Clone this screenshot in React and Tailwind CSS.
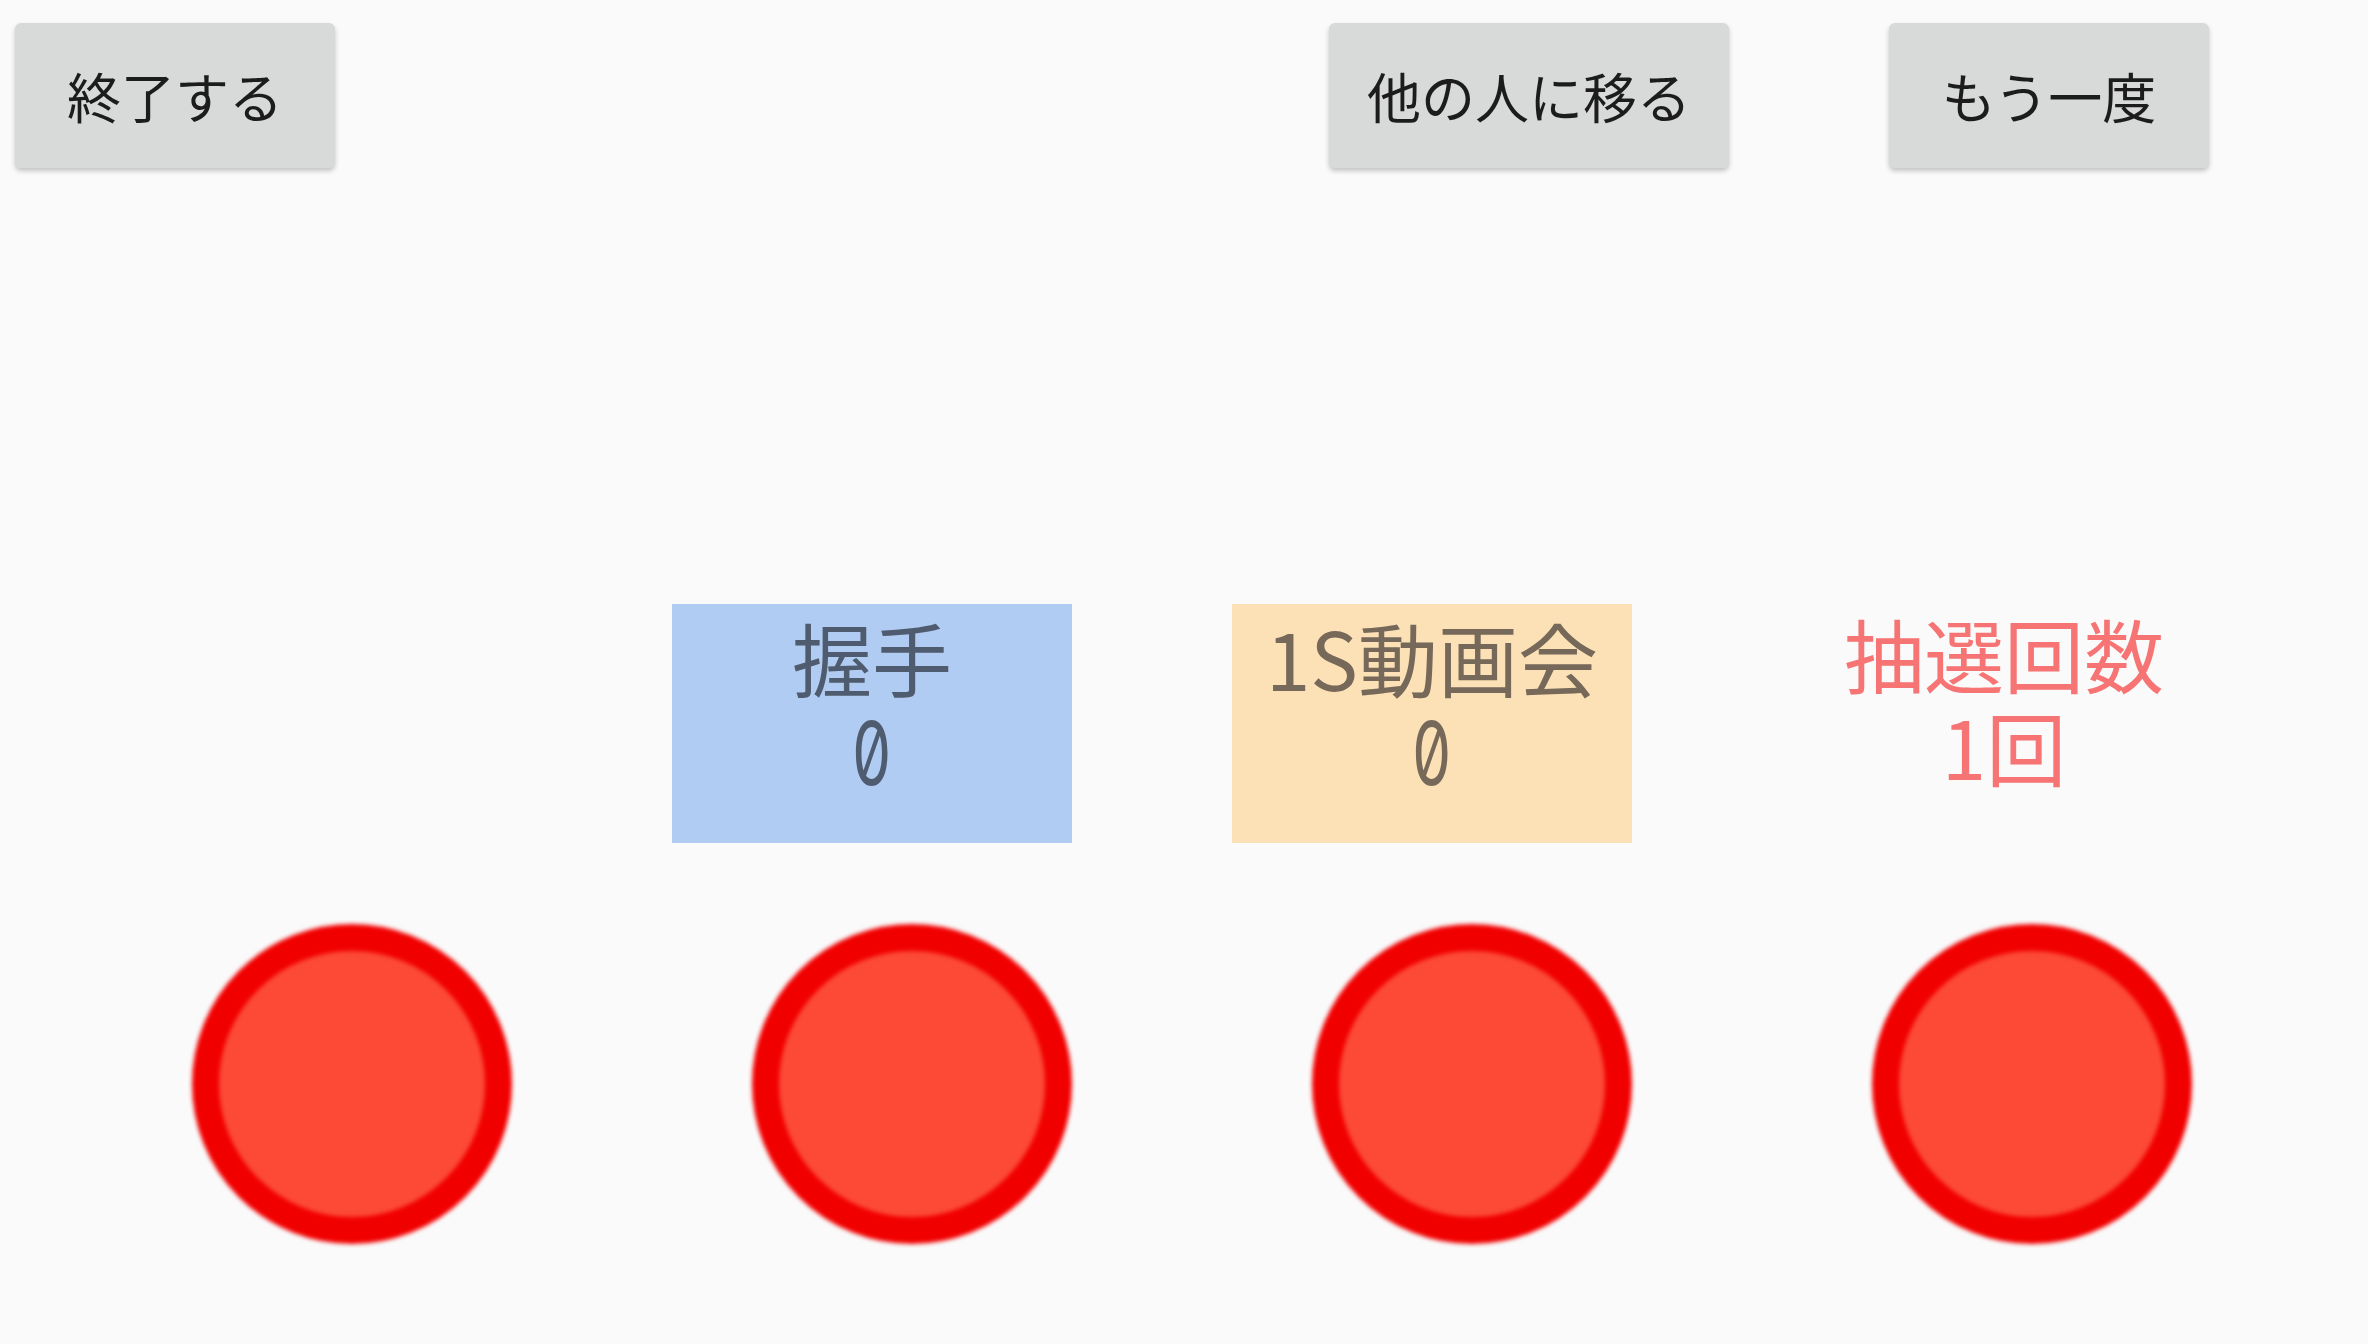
const jp = { fontFamily: '"Noto Sans CJK JP", "Noto Sans", sans-serif' };

function TopButton({ children }) {
  return (
    <button
      className="h-[145px] min-w-[320px] px-[38px] rounded-[6px] bg-[#d8d9d9] text-[#1c1c1c] text-[54px] leading-none shadow-[0_3px_5px_rgba(0,0,0,0.22)]"
      style={jp}
    >
      {children}
    </button>
  );
}

function Counter({ label, value, box, text }) {
  return (
    <div className={`w-[400px] h-[239px] flex flex-col items-center gap-[13px] pt-[12px] ${box}`}>
      <span className={`text-[80px] leading-none ${text}`} style={jp}>
        {label}
      </span>
      <span
        className={`inline-block text-[88px] leading-none slashed-zero scale-x-70 ${text}`}
        style={{ fontFamily: 'Inter, sans-serif' }}
      >
        {value}
      </span>
    </div>
  );
}

function DrawCount({ count }) {
  return (
    <div className="w-[400px] flex flex-col items-center gap-[13px] pt-[8px] pl-[24px] text-[#f67474]" style={jp}>
      <span className="text-[80px] leading-none">抽選回数</span>
      <span className="text-[80px] leading-none">{count}回</span>
    </div>
  );
}

function RedButton() {
  return (
    <div className="w-[320px] h-[320px] rounded-full border-[27px] border-[#f10000] bg-[#fc4a37] blur-[2px]" />
  );
}

export default function App() {
  return (
    <div className="w-[2368px] h-[1344px] bg-[#fafafa] overflow-hidden flex flex-col">
      <div className="flex justify-between pt-[23px] pl-[15px] pr-[159px]">
        <TopButton>終了する</TopButton>
        <div className="flex gap-[160px]">
          <TopButton>他の人に移る</TopButton>
          <TopButton>もう一度</TopButton>
        </div>
      </div>

      <div className="flex gap-[160px] pl-[112px] mt-[436px]">
        <div className="w-[400px]" />
        <Counter label="握手" value="0" box="bg-[#b0ccf2]" text="text-[#4f5b6e]" />
        <Counter label="1S動画会" value="0" box="bg-[#fde1b6]" text="text-[#76695a]" />
        <DrawCount count={1} />
      </div>

      <div className="flex gap-[240px] pl-[192px] mt-[81px]">
        <RedButton />
        <RedButton />
        <RedButton />
        <RedButton />
      </div>
    </div>
  );
}
